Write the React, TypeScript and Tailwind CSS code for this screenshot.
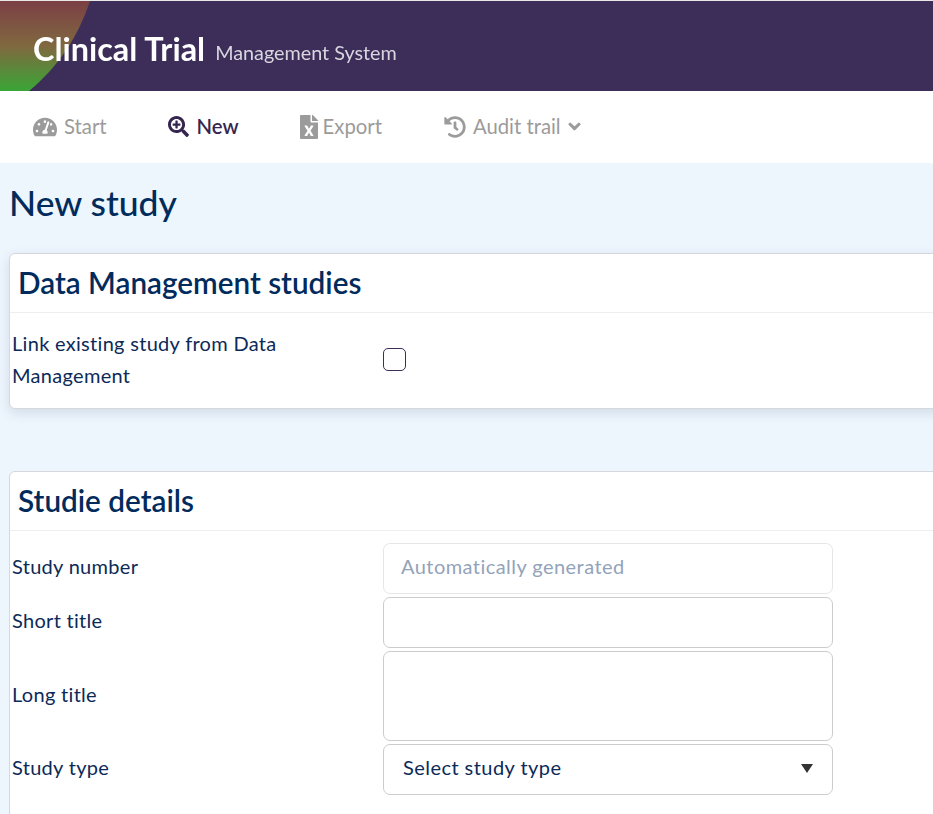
import React from 'react';
import { FaTachometerAlt, FaSearchPlus, FaFileExcel, FaHistory, FaChevronDown } from 'react-icons/fa';

const font = "font-['Lato','Liberation_Sans',sans-serif]";

const NavItem: React.FC<{ icon: React.ReactNode; label: string; active?: boolean; className?: string; children?: React.ReactNode }> = ({ icon, label, active, className, children }) => (
  <div className={`flex items-center text-[20.3px] ${active ? 'text-[#35264f] font-semibold' : 'text-[#9b9b9b]'} ${className ?? ''}`}>
    {icon}
    <span>{label}</span>
    {children}
  </div>
);

const Row: React.FC<{ label: string; children: React.ReactNode }> = ({ label, children }) => (
  <div className="flex items-center mb-[3px]">
    <div className="w-[373px] pl-[2px] pb-[5px] text-[20px] tracking-[0.3px] leading-[32px] text-[#0c2a58]">{label}</div>
    {children}
  </div>
);

export default function App() {
  return (
    <div className={`w-[933px] h-[814px] overflow-hidden bg-[#edf5fd] ${font}`}>
      {/* Banner */}
      <div className="relative h-[91px] bg-[#3c2d59] border-t border-t-[#e8e8e8] box-border flex items-end">
        <svg className="absolute left-0 top-0" width="90" height="90" viewBox="0 0 90 90">
          <defs>
            <linearGradient id="corner" x1="0" y1="0" x2="0" y2="1">
              <stop offset="0" stopColor="#7b3f45" />
              <stop offset="0.5" stopColor="#80683f" />
              <stop offset="1" stopColor="#3aa636" />
            </linearGradient>
          </defs>
          <path d="M0 0 H90 C78 36 58 66 29 90 H0 Z" fill="url(#corner)" />
        </svg>
        <div className="relative flex items-baseline pl-[33px] pb-[24px] text-white blur-[0.4px]">
          <span className="text-[32.4px] font-bold leading-[36px]">Clinical Trial</span>
          <span className="ml-[10px] text-[19.8px] leading-[24px] text-[#d9d6e0] -translate-y-[1px]">Management System</span>
        </div>
      </div>

      {/* Nav */}
      <div className="h-[72px] bg-white flex items-center pl-[33px] pb-[1px]">
        <NavItem icon={<FaTachometerAlt className="w-[24px] h-[24px] mr-[7px]" />} label="Start" />
        <NavItem active className="ml-[61px]" icon={<FaSearchPlus className="w-[21px] h-[21px] mr-[8px]" />} label="New" />
        <NavItem className="ml-[61px]" icon={<FaFileExcel className="w-[18px] h-[24px] mr-[5px]" />} label="Export" />
        <NavItem className="ml-[62px]" icon={<FaHistory className="w-[22px] h-[22px] mr-[7px]" />} label="Audit trail">
          <FaChevronDown className="w-[13px] h-[13px] ml-[7px] [stroke-width:40]" />
        </NavItem>
      </div>

      {/* Content */}
      <div className="pl-[9px]">
        <h1 className="pt-[19px] h-[90px] text-[35.5px] leading-[42px] font-medium text-[#002b5c]">New study</h1>

        <div className="w-[960px] h-[156px] bg-white rounded-[6px] border border-[#d5d8dc] shadow-[0_4px_12px_rgba(60,80,110,0.15)]">
          <h2 className="h-[59px] pl-[8px] border-b border-[#eeeeee] text-[29.7px] leading-[57px] font-semibold text-[#002b5c]">Data Management studies</h2>
          <div className="flex items-center pt-[14px]">
            <div className="w-[373px] pl-[2px] pb-[2px] text-[20px] tracking-[0.3px] leading-[32px] text-[#0c2a58]">
              Link existing study from Data<br />Management
            </div>
            <input type="checkbox" className="appearance-none mb-[2px] w-[23px] h-[23px] rounded-[5px] border border-[#3c2d59] bg-white" />
          </div>
        </div>

        <div className="w-[960px] h-[400px] mt-[62px] bg-white rounded-[6px] border border-[#d5d8dc]">
          <h2 className="h-[59px] pl-[8px] mb-[12px] border-b border-[#eeeeee] text-[29.7px] leading-[57px] font-semibold text-[#002b5c]">Studie details</h2>
          <Row label="Study number">
            <input disabled placeholder="Automatically generated" className="w-[450px] h-[51px] px-[17px] pb-[6px] rounded-[7px] border border-[#e6e6e6] bg-white text-[20px] tracking-[0.45px] placeholder:text-[#93a3ba]" />
          </Row>
          <Row label="Short title">
            <input className="w-[450px] h-[51px] rounded-[7px] border border-[#cccccc] bg-white" />
          </Row>
          <Row label="Long title">
            <textarea className="w-[450px] h-[90px] block resize-none rounded-[7px] border border-[#cccccc] bg-white" />
          </Row>
          <Row label="Study type">
            <div className="w-[450px] h-[51px] pl-[19px] pr-[19px] pb-[6px] flex items-center justify-between rounded-[7px] border border-[#cccccc] bg-white text-[20px] tracking-[0.45px] text-[#0c2a58]">
              <span>Select study type</span>
              <span className="mt-[4px] w-0 h-0 border-x-[6px] border-x-transparent border-t-[9px] border-t-[#333333]" />
            </div>
          </Row>
        </div>
      </div>
    </div>
  );
}
